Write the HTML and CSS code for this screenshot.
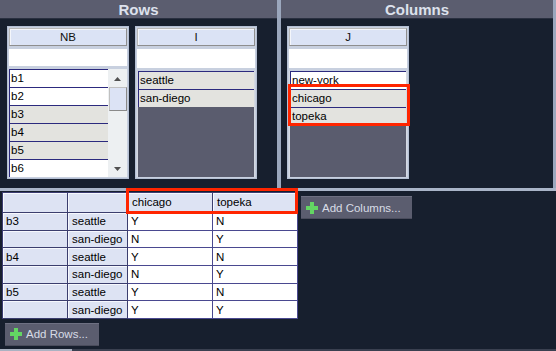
FILE: index.html
```html
<!DOCTYPE html>
<html>
<head>
<meta charset="utf-8">
<link rel="stylesheet" href="styles.css">
</head>
<body>
<div class="app">
  <div class="top">
    <section class="panel panel-rows">
      <div class="title">Rows</div>
      <div class="lists">
        <div class="listbox">
          <div class="hdr-btn">NB</div>
          <div class="filter"></div>
          <div class="list list-white">
            <div class="items">
              <div class="item">b1</div>
              <div class="item">b2</div>
              <div class="item sel">b3</div>
              <div class="item sel">b4</div>
              <div class="item sel">b5</div>
              <div class="item">b6</div>
            </div>
            <div class="scrollbar">
              <svg class="arrow" width="7" height="4" viewBox="0 0 7 4"><path d="M3.5 0L7 4H0z" fill="#505050"/></svg>
              <div class="thumb"></div>
              <div class="track"></div>
              <svg class="arrow" width="7" height="4" viewBox="0 0 7 4"><path d="M0 0h7L3.5 4z" fill="#505050"/></svg>
            </div>
          </div>
        </div>
        <div class="listbox">
          <div class="hdr-btn">I</div>
          <div class="filter"></div>
          <div class="list list-grey">
            <div class="items">
              <div class="item sel">seattle</div>
              <div class="item sel">san-diego</div>
            </div>
          </div>
        </div>
      </div>
    </section>
    <div class="vsep"></div>
    <section class="panel panel-cols">
      <div class="title">Columns</div>
      <div class="lists">
        <div class="listbox">
          <div class="hdr-btn">J</div>
          <div class="filter"></div>
          <div class="list list-grey">
            <div class="items">
              <div class="item">new-york</div>
              <div class="item sel">chicago</div>
              <div class="item sel">topeka</div>
            </div>
            <div class="mark mark-list"></div>
          </div>
        </div>
      </div>
    </section>
    <div class="redge"></div>
  </div>
  <div class="hbar"></div>
  <div class="bottom">
    <div class="grid-row">
      <div class="table-wrap">
        <table class="pivot">
          <tr class="head">
            <td class="lb c1"></td><td class="lb c2"></td><td class="lb c3">chicago</td><td class="lb c4">topeka</td>
          </tr>
          <tr><td class="lb">b3</td><td class="lb">seattle</td><td>Y</td><td>N</td></tr>
          <tr><td class="lb"></td><td class="lb">san-diego</td><td>N</td><td>Y</td></tr>
          <tr><td class="lb">b4</td><td class="lb">seattle</td><td>Y</td><td>N</td></tr>
          <tr><td class="lb"></td><td class="lb">san-diego</td><td>N</td><td>Y</td></tr>
          <tr><td class="lb">b5</td><td class="lb">seattle</td><td>Y</td><td>N</td></tr>
          <tr><td class="lb"></td><td class="lb">san-diego</td><td>Y</td><td>Y</td></tr>
        </table>
        <div class="mark mark-head"></div>
      </div>
      <button class="add-btn add-cols">
        <svg width="12" height="12" viewBox="0 0 12 12"><path d="M4 0h4v4h4v4H8v4H4V8H0V4h4z" fill="#63d563"/></svg>
        <span>Add Columns...</span>
      </button>
    </div>
    <button class="add-btn add-rows">
      <svg width="12" height="12" viewBox="0 0 12 12"><path d="M4 0h4v4h4v4H8v4H4V8H0V4h4z" fill="#63d563"/></svg>
      <span>Add Rows...</span>
    </button>
  </div>
  <div class="hscroll"><div class="hscroll-thumb"></div></div>
</div>
</body>
</html>
```
FILE: styles.css
```css
* { box-sizing: border-box; }
html, body { margin: 0; padding: 0; }
body {
  width: 556px;
  height: 351px;
  overflow: hidden;
  background: #171f2e;
  font-family: "Liberation Sans", Arial, sans-serif;
  font-size: 11.5px;
  color: #000;
}
.app { width: 556px; height: 351px; display: flex; flex-direction: column; }

.top { display: flex; height: 188px; flex: none; }
.panel { display: flex; flex-direction: column; }
.panel-rows { width: 277px; }
.panel-cols { flex: 1; }
.vsep { width: 4px; background: #9ba7bd; }
.redge { width: 3px; background: #9ba7bd; }

.title {
  height: 19px;
  background: #5b5d6f;
  color: #dde1ec;
  font-weight: bold;
  font-size: 15px;
  line-height: 20px;
  text-align: center;
  border-bottom: 1px solid #2a3040;
}
.lists { display: flex; gap: 6px; padding: 7px 0 0 7px; }
.panel-cols .lists { padding-left: 6px; }

.listbox {
  width: 122px;
  height: 153px;
  border: 1px solid #b5c0d4;
  background: #c8d0df;
  padding: 1px;
  display: flex;
  flex-direction: column;
}
.hdr-btn {
  height: 18px;
  background: #dbe3f5;
  border: 1px solid #8e8e8e;
  border-top-color: #b8b8b8;
  border-left-color: #b8b8b8;
  box-shadow: inset 1px 1px 0 #f4f6fb;
  text-align: center;
  line-height: 16px;
  color: #101010;
}
.filter { margin-top: 3px; height: 19px; background: #fff; }
.list { margin-top: 3px; flex: 1; display: flex; position: relative; }
.list-white { background: #fff; }
.list-grey { background: #5a5c6e; border: 1px solid #d3d8e2; border-top: 0; border-bottom: 0; }
.items { flex: 1; display: flex; flex-direction: column; }
.item {
  height: 18px;
  border-top: 1px solid #2c2a7e;
  border-left: 1px solid #2c2a7e;
  background: #fff;
  padding-left: 1px;
  line-height: 17px;
  white-space: nowrap;
}
.item.sel { background: #e3e3df; }

.scrollbar {
  width: 19px;
  background: #edf0f2;
  display: flex;
  flex-direction: column;
  align-items: center;
  padding: 8px 0 6px;
}
.scrollbar .arrow { flex: none; }
.thumb {
  margin-top: 6px;
  width: 18px;
  height: 24px;
  background: #dce3f5;
  border: 1px solid #8a8a8a;
  border-top-color: #c0c0c0;
  border-left-color: #c0c0c0;
}
.track { flex: 1; }

.mark { position: absolute; border: 3px solid #ff2500; pointer-events: none; z-index: 2; }
.mark-list { left: -2px; top: 13px; width: 122px; height: 42px; }

.hbar { height: 3px; background: #a9b4c8; flex: none; }

.bottom { flex: 1; min-height: 0; display: flex; flex-direction: column; padding: 1px 0 0 2px; }
.grid-row { display: flex; align-items: flex-start; }
.table-wrap { position: relative; }
.pivot {
  border-collapse: separate;
  border-spacing: 0;
  table-layout: fixed;
  width: 295px;
  border-top: 1px solid #3c3d72;
  border-left: 1px solid #3c3d72;
}
.pivot td {
  padding: 1px 0 0 3px;
  height: 17.67px;
  line-height: 15px;
  border-right: 1px solid #4a4990;
  border-bottom: 1px solid #4a4990;
  background: #fff;
  white-space: nowrap;
  overflow: hidden;
  vertical-align: middle;
}
.pivot td.lb {
  background: #dde3f3;
  border-right-color: #3b3e6e;
  border-bottom-color: #3b3e6e;
  box-shadow: inset 1px 1px 0 #f6f8fd;
}
.pivot tr td:nth-child(2) { padding-left: 4px; }
.pivot .head td { height: 20px; padding: 0 0 0 4px; line-height: 19px; }
.pivot .c1 { width: 65px; }
.pivot .c2 { width: 60px; }
.pivot .c3 { width: 85px; }
.pivot .c4 { width: 85px; }
.mark-head { left: 124px; top: -4px; width: 172px; height: 26px; }

.add-btn {
  display: flex;
  align-items: center;
  gap: 4px;
  height: 23px;
  flex: none;
  background: #5b5d6f;
  border: 0;
  border-top: 1px solid #6e7082;
  border-bottom: 1px solid #4a4c5c;
  color: #d8dce6;
  font-family: "Liberation Sans", Arial, sans-serif;
  font-size: 11.5px;
  padding: 0 0 0 5px;
  margin: 0;
}
.add-cols { width: 111px; margin: 4px 0 0 3px; }
.add-rows { width: 94px; margin: 4px 0 0 3px; }

.hscroll { height: 2px; background: #3a4050; display: flex; flex: none; }
.hscroll-thumb { width: 72px; background: #aab2c2; }
```
